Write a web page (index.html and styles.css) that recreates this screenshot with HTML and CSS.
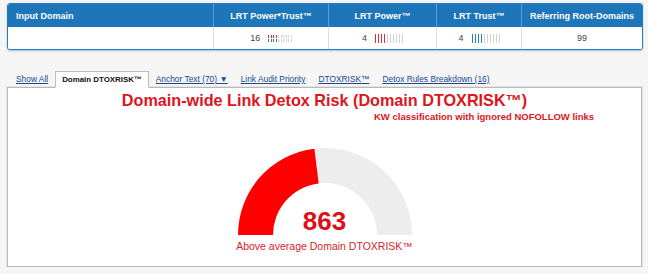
FILE: index.html
```html
<!DOCTYPE html>
<html>
<head>
<meta charset="utf-8">
<link rel="stylesheet" href="styles.css">
</head>
<body>
<div class="page">
  <div class="metrics">
    <div class="mrow head">
      <div class="cell left">Input Domain</div>
      <div class="cell">LRT Power*Trust™</div>
      <div class="cell">LRT Power™</div>
      <div class="cell">LRT Trust™</div>
      <div class="cell">Referring Root-Domains</div>
    </div>
    <div class="mrow body">
      <div class="cell left"></div>
      <div class="cell">
        <span class="num">16</span>
        <span class="dual">
          <span class="ticks red"><i class="on"></i><i class="on"></i><i class="on"></i><i class="on"></i><i></i><i></i><i></i><i></i><i></i><i></i></span>
          <span class="ticks blue"><i class="on"></i><i class="on"></i><i class="on"></i><i class="on"></i><i></i><i></i><i></i><i></i><i></i><i></i></span>
        </span>
      </div>
      <div class="cell">
        <span class="num">4</span>
        <span class="ticks red"><i class="on"></i><i class="on"></i><i class="on"></i><i class="on"></i><i></i><i></i><i></i><i></i><i></i><i></i></span>
      </div>
      <div class="cell">
        <span class="num">4</span>
        <span class="ticks blue"><i class="on"></i><i class="on"></i><i class="on"></i><i class="on"></i><i></i><i></i><i></i><i></i><i></i><i></i></span>
      </div>
      <div class="cell"><span class="num">99</span></div>
    </div>
  </div>

  <div class="tabs">
    <a class="tab link" href="#">Show All</a>
    <span class="tab active">Domain DTOXRISK™</span>
    <a class="tab link" href="#">Anchor Text (70) ▼</a>
    <a class="tab link" href="#">Link Audit Priority</a>
    <a class="tab link" href="#">DTOXRISK™</a>
    <a class="tab link" href="#">Detox Rules Breakdown (16)</a>
  </div>

  <div class="panel">
    <div class="title">Domain-wide Link Detox Risk (Domain DTOXRISK™)</div>
    <div class="subtitle">KW classification with ignored NOFOLLOW links</div>
    <div class="gauge">
      <svg class="arc" width="176" height="88" viewBox="0 0 176 88">
        <path d="M 1 88 A 87 87 0 0 1 175 88 L 140 88 A 52 52 0 0 0 36 88 Z" fill="#ededed"/>
        <path d="M 1 88 A 87 87 0 0 1 77.4 1.65 L 81.66 36.39 A 52 52 0 0 0 36 88 Z" fill="#ff0000"/>
      </svg>
      <div class="value">863</div>
    </div>
    <div class="caption">Above average Domain DTOXRISK™</div>
  </div>
</div>
</body>
</html>
```

FILE: styles.css
```css
html, body {
  margin: 0;
  padding: 0;
  background: #f5f5f5;
  font-family: "Liberation Sans", Arial, sans-serif;
}

.page {
  padding: 3px 5px 0 7px;
}

.metrics {
  border: 1px solid #2a7dbf;
  border-radius: 3px;
  background: #fff;
  box-shadow: 0 1px 2px rgba(20, 90, 150, 0.35);
  overflow: hidden;
}

.mrow {
  display: grid;
  grid-template-columns: 205fr 115fr 108fr 85fr 121fr;
}

.mrow.head {
  background: #1d75ba;
  height: 23px;
}

.mrow.body {
  height: 22px;
  background: #fff;
}

.cell {
  display: flex;
  align-items: center;
  justify-content: center;
  gap: 8px;
}

.head .cell {
  color: #fff;
  font-weight: bold;
  font-size: 9px;
  border-left: 1px solid rgba(255, 255, 255, 0.3);
}

.body .cell {
  border-left: 1px solid #dcdcdc;
}

.mrow .cell:first-child {
  border-left: none;
}

.cell.left {
  justify-content: flex-start;
  padding-left: 8px;
}

.num {
  font-size: 9px;
  color: #444;
}

.dual {
  display: flex;
  flex-direction: column;
  gap: 1px;
}

.ticks {
  display: flex;
  gap: 2px;
}

.ticks i {
  display: block;
  width: 1px;
  height: 9px;
  background: #d4d4d4;
}

.dual .ticks {
  gap: 1.5px;
}

.dual .ticks i {
  height: 3px;
}

.ticks.red i.on {
  background: #d7303b;
}

.ticks.blue i.on {
  background: #2a7dc6;
}

.tabs {
  display: flex;
  align-items: flex-end;
  margin-top: 21px;
  padding-left: 2.5px;
  height: 16px;
  position: relative;
  z-index: 1;
}

.tab {
  font-size: 8.4px;
  line-height: 14px;
  padding: 0 6.5px;
  white-space: nowrap;
}

.tab.link {
  color: #21498c;
  text-decoration: underline;
  padding-bottom: 1px;
}

.tab.active {
  font-weight: bold;
  color: #111;
  font-size: 7.9px;
  background: #fff;
  border: 1px solid #bdbdbd;
  border-bottom: 1px solid #fff;
  line-height: 15px;
  margin-bottom: -1px;
}

.panel {
  box-sizing: border-box;
  height: 180px;
  background: #fff;
  border: 1px solid #b9b9b9;
  box-shadow: 0 0 0 1px #e4e4e4;
  margin-right: 1px;
}

.title {
  margin-top: 2px;
  text-align: center;
  color: #e0141c;
  font-weight: bold;
  font-size: 16.2px;
  line-height: 20px;
}

.subtitle {
  margin-top: 1px;
  padding-left: 366px;
  color: #e0141c;
  font-weight: bold;
  font-size: 9.5px;
  line-height: 12px;
  white-space: nowrap;
}

.gauge {
  position: relative;
  width: 176px;
  height: 88px;
  margin: 24px auto 0;
}

.arc {
  display: block;
}

.value {
  position: absolute;
  left: 0;
  right: 0;
  top: 61px;
  text-align: center;
  color: #dd1018;
  font-weight: bold;
  font-size: 26px;
  line-height: 26px;
}

.caption {
  margin-top: 5px;
  text-align: center;
  color: #d8232a;
  font-size: 10.5px;
  line-height: 12px;
}
```
